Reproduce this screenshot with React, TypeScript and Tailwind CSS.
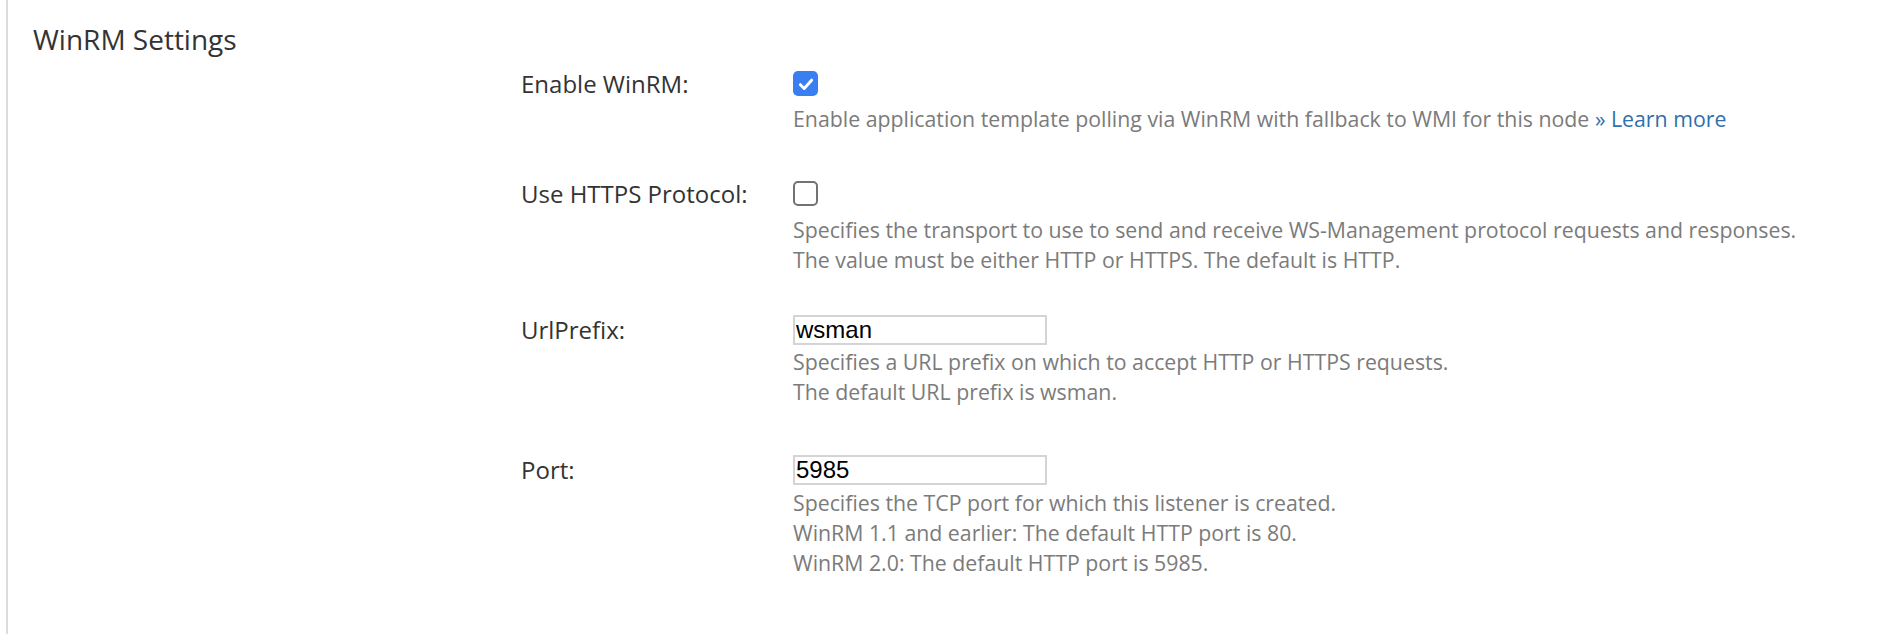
import { useState } from "react";

type Row = {
  label: string;
  kind: "checkbox" | "input";
  value?: string;
  checked?: boolean;
  lines: React.ReactNode[];
  rowClass: string;
  descClass: string;
};

function Checkbox({ checked, onToggle }: { checked: boolean; onToggle: () => void }) {
  return (
    <button
      type="button"
      onClick={onToggle}
      className={
        checked
          ? "mt-[2px] w-[25px] h-[25px] rounded-[5px] bg-[#3a7ff2] flex items-center justify-center"
          : "mt-[2px] w-[25px] h-[25px] rounded-[5px] border-2 border-[#727272] bg-white"
      }
    >
      {checked && (
        <svg viewBox="0 0 16 16" className="w-[18px] h-[18px]">
          <path
            d="M3 8.6 6.4 12 13 4.6"
            fill="none"
            stroke="white"
            strokeWidth="2.6"
            strokeLinecap="round"
            strokeLinejoin="round"
          />
        </svg>
      )}
    </button>
  );
}

export default function App() {
  const [enabled, setEnabled] = useState(true);
  const [https, setHttps] = useState(false);
  const [prefix, setPrefix] = useState("wsman");
  const [port, setPort] = useState("5985");

  const rows: Row[] = [
    {
      label: "Enable WinRM:",
      kind: "checkbox",
      checked: enabled,
      rowClass: "mt-[12px]",
      descClass: "mt-[8px]",
      lines: [
        <>
          Enable application template polling via WinRM with fallback to WMI for this node{" "}
          <a href="#" className="text-[#2f70ad]">
            » Learn more
          </a>
        </>,
      ],
    },
    {
      label: "Use HTTPS Protocol:",
      kind: "checkbox",
      checked: https,
      rowClass: "mt-[45px]",
      descClass: "mt-[9px]",
      lines: [
        "Specifies the transport to use to send and receive WS-Management protocol requests and responses.",
        "The value must be either HTTP or HTTPS. The default is HTTP.",
      ],
    },
    {
      label: "UrlPrefix:",
      kind: "input",
      value: prefix,
      rowClass: "mt-[40px]",
      descClass: "mt-[2px]",
      lines: [
        "Specifies a URL prefix on which to accept HTTP or HTTPS requests.",
        "The default URL prefix is wsman.",
      ],
    },
    {
      label: "Port:",
      kind: "input",
      value: port,
      rowClass: "mt-[48px]",
      descClass: "mt-[3px]",
      lines: [
        "Specifies the TCP port for which this listener is created.",
        "WinRM 1.1 and earlier: The default HTTP port is 80.",
        "WinRM 2.0: The default HTTP port is 5985.",
      ],
    },
  ];

  return (
    <div className="w-[1886px] h-[634px] bg-white font-['Open_Sans',sans-serif] overflow-hidden">
      <div className="ml-[6px] h-full border-l-2 border-[#dcdcdc] pl-[25px]">
        {/* Section title */}
        <h2 className="pt-[21px] text-[28px] leading-[36px] text-[#333]">WinRM Settings</h2>

        {/* Form rows */}
        <div className="pl-[488px]">
          {rows.map((row, i) => (
            <div key={i} className={"flex " + row.rowClass}>
              <div className="w-[272px] shrink-0 text-[24px] leading-[30px] text-[#333]">{row.label}</div>
              <div className="flex flex-col">
                {row.kind === "checkbox" ? (
                  <Checkbox
                    checked={!!row.checked}
                    onToggle={() => (i === 0 ? setEnabled(!enabled) : setHttps(!https))}
                  />
                ) : (
                  <input
                    value={row.value}
                    onChange={(e) => (i === 2 ? setPrefix(e.target.value) : setPort(e.target.value))}
                    className="w-[254px] h-[30px] border-2 border-[#d4d4d4] px-[1px] font-['Liberation_Sans',sans-serif] text-[24px] text-black outline-none"
                  />
                )}
                <div className={"text-[21.3px] leading-[30px] text-[#7b7b7b] " + row.descClass}>
                  {row.lines.map((line, j) => (
                    <div key={j}>{line}</div>
                  ))}
                </div>
              </div>
            </div>
          ))}
        </div>
      </div>
    </div>
  );
}
